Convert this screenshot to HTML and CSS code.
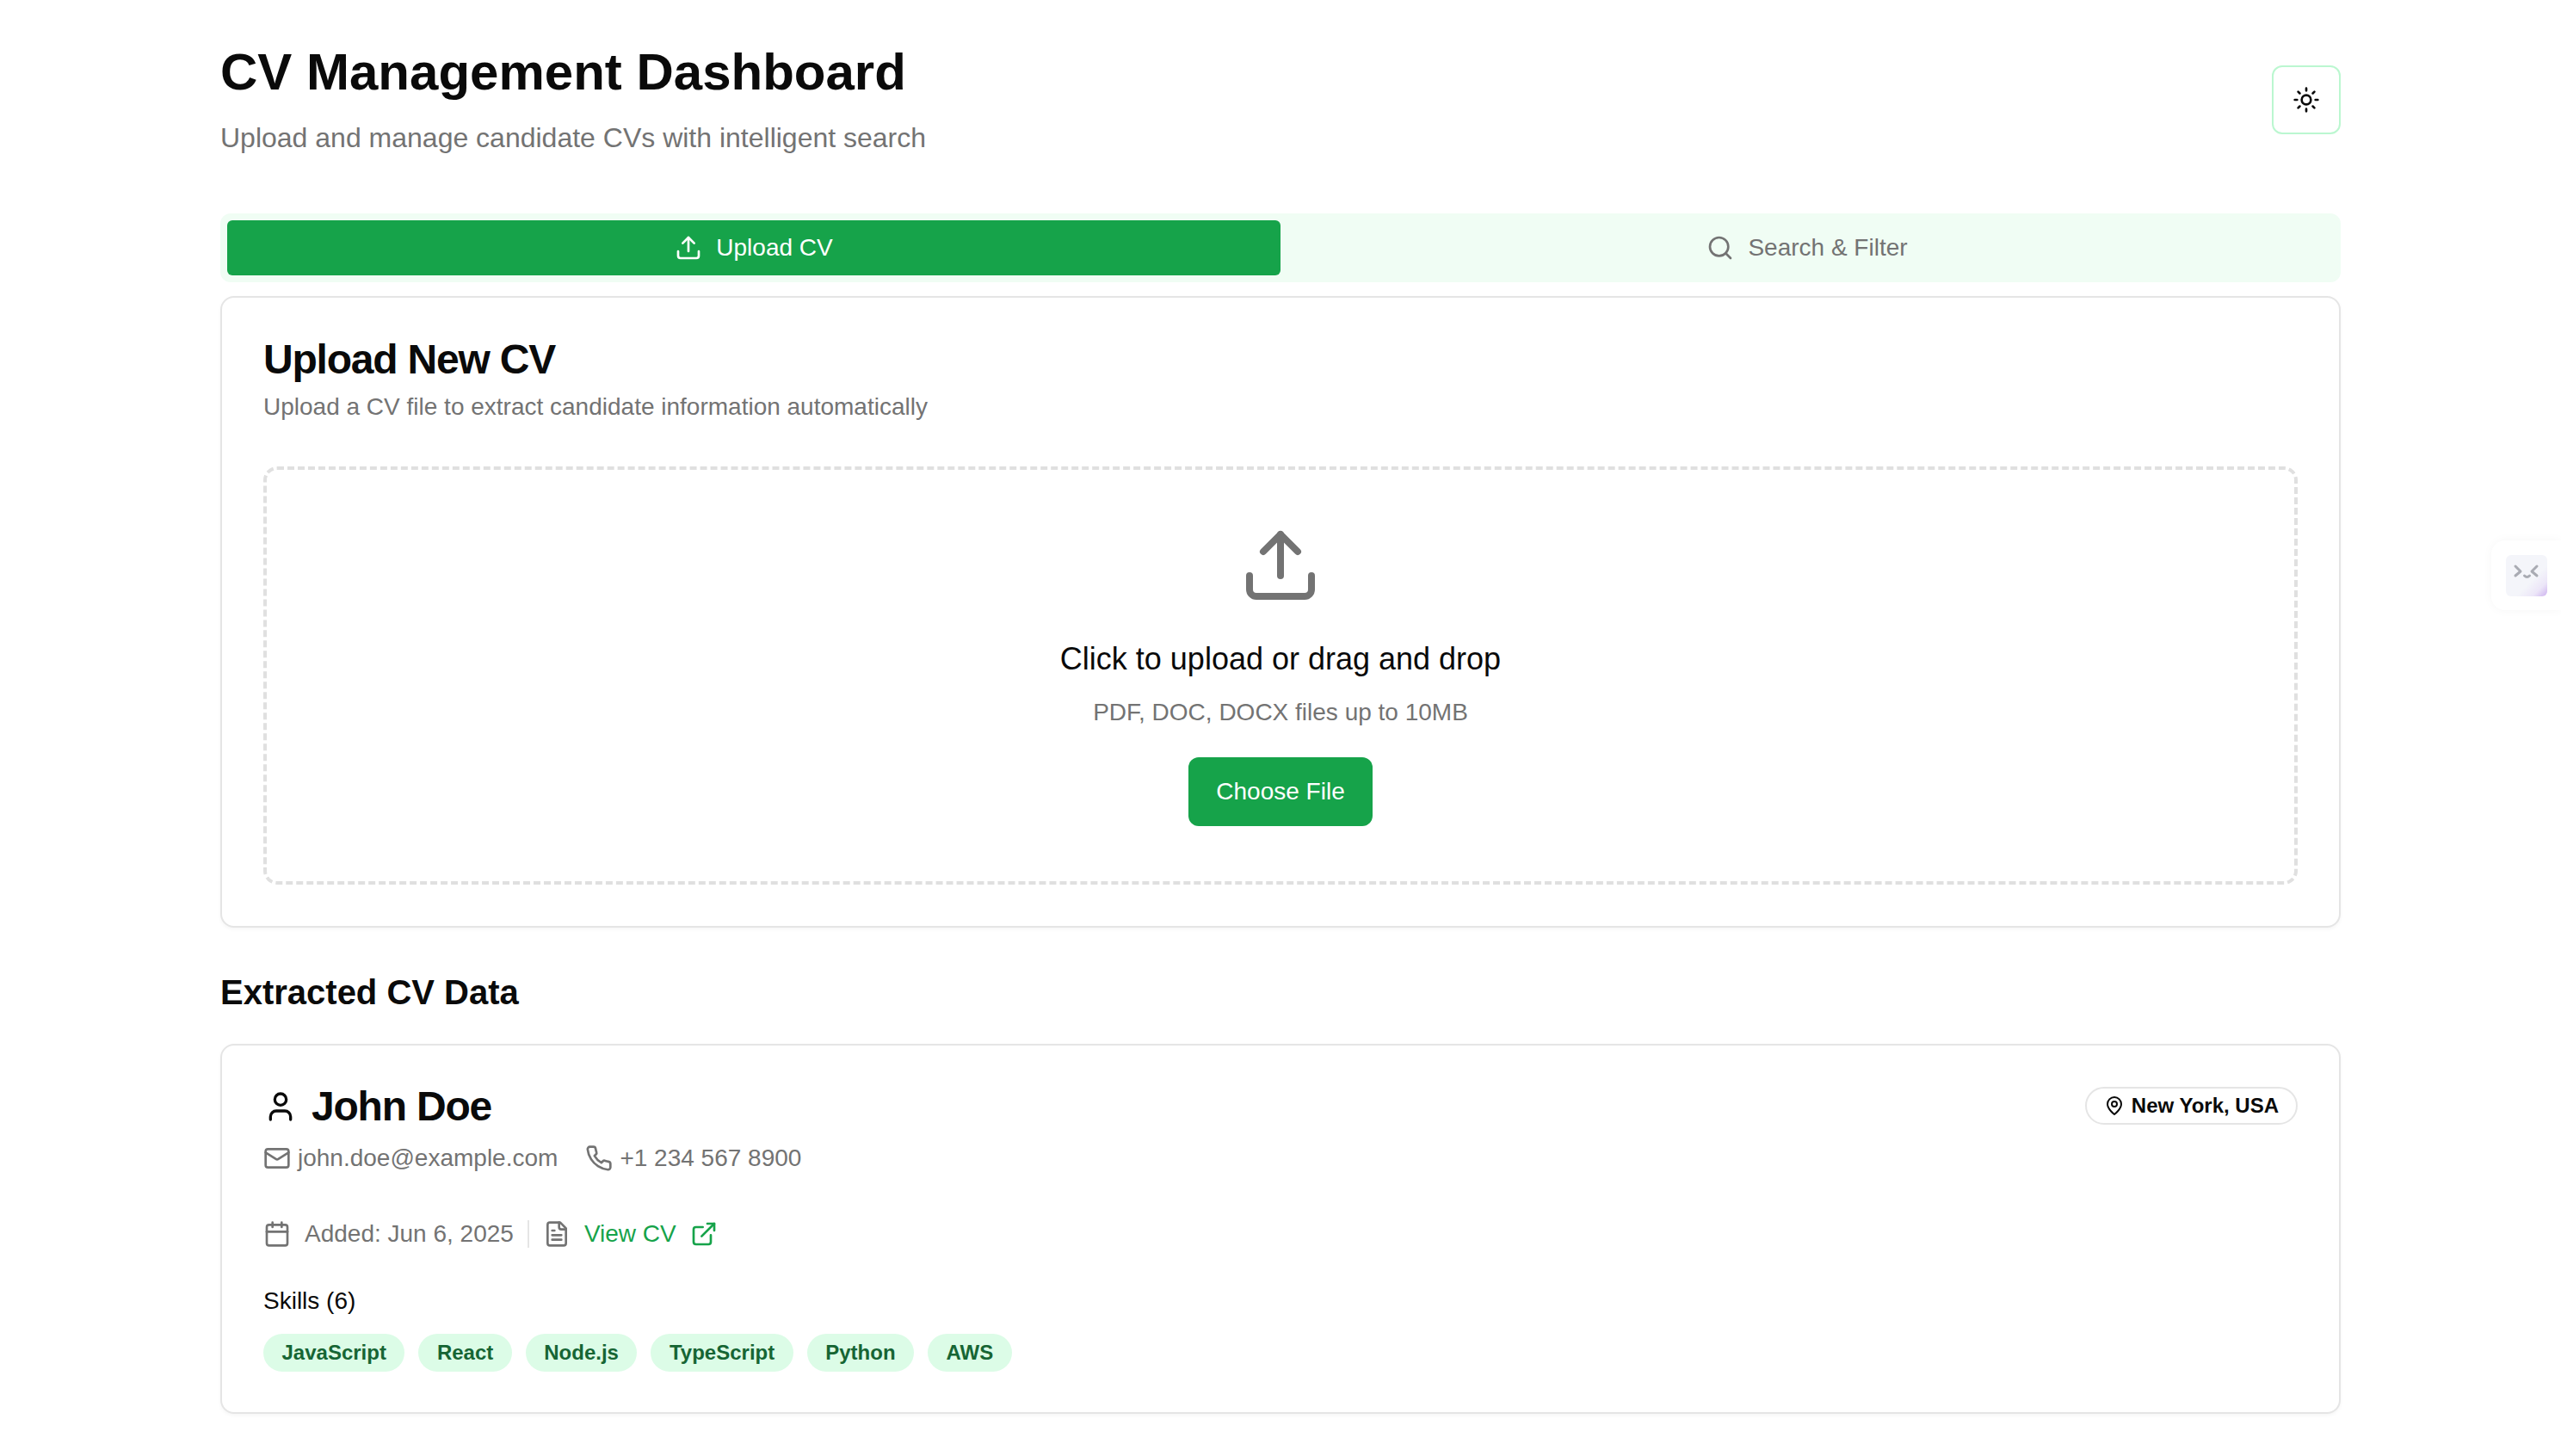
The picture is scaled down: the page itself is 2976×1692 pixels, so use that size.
FILE: index.html
```html
<!DOCTYPE html>
<html lang="en">
<head>
    <meta charset="UTF-8">
    <meta name="viewport" content="width=device-width, initial-scale=1.0">
    <title>CV Management Dashboard</title>
    <link rel="stylesheet" href="styles.css">
</head>
<body>
    <main class="page">
        <header class="top">
            <div>
                <h1>CV Management Dashboard</h1>
                <p class="subtitle">Upload and manage candidate CVs with intelligent search</p>
            </div>
            <button class="theme-btn">
                <svg class="icon" viewBox="0 0 24 24"><circle cx="12" cy="12" r="4"/><path d="M12 2v2M12 20v2M4.93 4.93l1.41 1.41M17.66 17.66l1.41 1.41M2 12h2M20 12h2M6.34 17.66l-1.41 1.41M19.07 4.93l-1.41 1.41"/></svg>
            </button>
        </header>

        <div class="tabs">
            <div class="tab active">
                <svg class="icon" viewBox="0 0 24 24"><path d="M21 15v4a2 2 0 0 1-2 2H5a2 2 0 0 1-2-2v-4"/><path d="M17 8l-5-5-5 5"/><path d="M12 3v12"/></svg>
                Upload CV
            </div>
            <div class="tab">
                <svg class="icon" viewBox="0 0 24 24"><circle cx="11" cy="11" r="8"/><path d="M21 21l-4.3-4.3"/></svg>
                Search &amp; Filter
            </div>
        </div>

        <section class="card">
            <h2>Upload New CV</h2>
            <p class="card-desc">Upload a CV file to extract candidate information automatically</p>
            <div class="dropzone">
                <svg class="drop-icon" viewBox="0 0 24 24"><path d="M21 15v4a2 2 0 0 1-2 2H5a2 2 0 0 1-2-2v-4"/><path d="M17 8l-5-5-5 5"/><path d="M12 3v12"/></svg>
                <h3>Click to upload or drag and drop</h3>
                <p class="drop-hint">PDF, DOC, DOCX files up to 10MB</p>
                <button class="choose-btn">Choose File</button>
            </div>
        </section>

        <h2 class="section-title">Extracted CV Data</h2>

        <section class="card cv-card">
            <div class="cv-head">
                <div>
                    <div class="cv-name">
                        <svg class="icon-name" viewBox="0 0 24 24"><path d="M19 21v-2a4 4 0 0 0-4-4H9a4 4 0 0 0-4 4v2"/><circle cx="12" cy="7" r="4"/></svg>
                        <h2>John Doe</h2>
                    </div>
                    <div class="contact">
                        <span class="contact-item">
                            <svg class="icon" viewBox="0 0 24 24"><rect x="2" y="4" width="20" height="16" rx="2"/><path d="M22 7l-8.97 5.7a1.94 1.94 0 0 1-2.06 0L2 7"/></svg>
                            john.doe@example.com
                        </span>
                        <span class="contact-item">
                            <svg class="icon" viewBox="0 0 24 24"><path d="M22 16.92v3a2 2 0 0 1-2.18 2 19.79 19.79 0 0 1-8.63-3.07 19.5 19.5 0 0 1-6-6 19.79 19.79 0 0 1-3.07-8.67A2 2 0 0 1 4.11 2h3a2 2 0 0 1 2 1.72 12.84 12.84 0 0 0 .7 2.81 2 2 0 0 1-.45 2.11L8.09 9.91a16 16 0 0 0 6 6l1.27-1.27a2 2 0 0 1 2.11-.45 12.84 12.84 0 0 0 2.81.7A2 2 0 0 1 22 16.92z"/></svg>
                            +1 234 567 8900
                        </span>
                    </div>
                </div>
                <span class="location">
                    <svg class="icon-small" viewBox="0 0 24 24"><path d="M20 10c0 6-8 12-8 12s-8-6-8-12a8 8 0 0 1 16 0Z"/><circle cx="12" cy="10" r="3"/></svg>
                    New York, USA
                </span>
            </div>

            <div class="meta">
                <svg class="icon" viewBox="0 0 24 24"><path d="M8 2v4M16 2v4"/><rect x="3" y="4" width="18" height="18" rx="2"/><path d="M3 10h18"/></svg>
                <span>Added: Jun 6, 2025</span>
                <span class="sep"></span>
                <svg class="icon" viewBox="0 0 24 24"><path d="M15 2H6a2 2 0 0 0-2 2v16a2 2 0 0 0 2 2h12a2 2 0 0 0 2-2V7Z"/><path d="M14 2v4a2 2 0 0 0 2 2h4"/><path d="M10 9H8M16 13H8M16 17H8"/></svg>
                <a class="cv-link" href="#">View CV</a>
                <svg class="icon icon-green" viewBox="0 0 24 24"><path d="M15 3h6v6"/><path d="M10 14L21 3"/><path d="M18 13v6a2 2 0 0 1-2 2H5a2 2 0 0 1-2-2V8a2 2 0 0 1 2-2h6"/></svg>
            </div>

            <div class="skills-label">Skills (6)</div>
            <div class="skills">
                <span class="skill">JavaScript</span>
                <span class="skill">React</span>
                <span class="skill">Node.js</span>
                <span class="skill">TypeScript</span>
                <span class="skill">Python</span>
                <span class="skill">AWS</span>
            </div>
        </section>
    </main>

    <div class="side-widget">
        <div class="side-face">
            <svg viewBox="0 0 48 48"><path d="M11 13l6 6-6 5M36 13l-6 6 6 5M21.5 24c2 2 4 2 6 0"/></svg>
        </div>
    </div>
</body>
</html>
```

FILE: styles.css
```css
* {
    box-sizing: border-box;
}

html, body {
    margin: 0;
    background: #fff;
    overflow: hidden;
}

body {
    font-family: "Liberation Sans", Arial, sans-serif;
    color: #0a0a0a;
    height: 1692px;
}

h1, h2, h3, p {
    margin: 0;
}

svg {
    fill: none;
    stroke: currentColor;
    stroke-linecap: round;
    stroke-linejoin: round;
    stroke-width: 2;
    flex-shrink: 0;
}

.icon {
    width: 32px;
    height: 32px;
}

.icon-small {
    width: 24px;
    height: 24px;
}

.icon-green {
    color: #16a34a;
}

.page {
    width: 2560px;
    margin: 0 auto;
    padding: 48px 48px 0;
}

.top {
    display: flex;
    justify-content: space-between;
    align-items: center;
    margin-bottom: 64px;
}

h1 {
    font-size: 60px;
    line-height: 72px;
    font-weight: 700;
}

.subtitle {
    font-size: 32px;
    line-height: 48px;
    color: #737373;
    margin-top: 16px;
}

.theme-btn {
    width: 80px;
    height: 80px;
    display: flex;
    align-items: center;
    justify-content: center;
    background: #fff;
    border: 2px solid #bbf7d0;
    border-radius: 12px;
    color: #0a0a0a;
    padding: 0;
}

.tabs {
    display: grid;
    grid-template-columns: 1fr 1fr;
    height: 80px;
    padding: 8px;
    background: #f0fdf4;
    border-radius: 12px;
}

.tab {
    display: flex;
    align-items: center;
    justify-content: center;
    gap: 16px;
    font-size: 28px;
    color: #737373;
    border-radius: 6px;
}

.tab.active {
    background: #16a34a;
    color: #fff;
}

.card {
    margin-top: 16px;
    padding: 48px;
    background: #fff;
    border: 2px solid #e5e5e5;
    border-radius: 16px;
    box-shadow: 0 2px 4px rgba(0, 0, 0, 0.04);
}

.card h2 {
    font-size: 48px;
    line-height: 48px;
    font-weight: 700;
    letter-spacing: -1.2px;
}

.card-desc {
    margin-top: 11px;
    font-size: 28px;
    line-height: 40px;
    color: #737373;
}

.dropzone {
    margin-top: 49px;
    padding: 63px 64px 64px;
    border: 4px dashed #e0e0e0;
    border-radius: 16px;
    display: flex;
    flex-direction: column;
    align-items: center;
    text-align: center;
}

.drop-icon {
    width: 96px;
    height: 96px;
    color: #737373;
}

.dropzone h3 {
    margin-top: 33px;
    font-size: 36px;
    line-height: 56px;
    font-weight: 400;
}

.drop-hint {
    margin-top: 14px;
    font-size: 28px;
    line-height: 40px;
    color: #737373;
}

.choose-btn {
    margin-top: 32px;
    height: 80px;
    padding: 0 32px;
    font-family: inherit;
    font-size: 28px;
    color: #fff;
    background: #16a34a;
    border: 0;
    border-radius: 12px;
}

.section-title {
    margin-top: 47px;
    font-size: 40px;
    line-height: 56px;
    font-weight: 700;
}

.section-title + .card {
    margin-top: 32px;
}

.cv-card {
    padding-top: 47px;
    padding-bottom: 47px;
}

.cv-head {
    display: flex;
    justify-content: space-between;
    align-items: flex-start;
}

.cv-name {
    display: flex;
    align-items: center;
    gap: 16px;
}

.icon-name {
    width: 40px;
    height: 40px;
}

.contact {
    display: flex;
    gap: 32px;
    margin-top: 16px;
    font-size: 28px;
    line-height: 40px;
    color: #737373;
}

.contact-item {
    display: flex;
    align-items: center;
    gap: 8px;
}

.location {
    display: flex;
    align-items: center;
    gap: 8px;
    height: 44px;
    margin-top: 1px;
    padding: 0 20px;
    border: 2px solid #e5e5e5;
    border-radius: 22px;
    font-size: 24px;
    font-weight: 700;
}

.meta {
    display: flex;
    align-items: center;
    gap: 16px;
    margin-top: 48px;
    font-size: 28px;
    line-height: 40px;
    color: #737373;
}

.sep {
    width: 2px;
    height: 32px;
    background: #e5e5e5;
}

.cv-link {
    color: #16a34a;
    text-decoration: none;
}

.skills-label {
    margin-top: 38px;
    font-size: 28px;
    line-height: 40px;
}

.skills {
    display: flex;
    gap: 16px;
    margin-top: 18px;
}

.skill {
    padding: 4px 19.5px;
    border: 2px solid transparent;
    border-radius: 22px;
    background: #dcfce7;
    color: #166534;
    font-size: 24px;
    line-height: 32px;
    font-weight: 700;
}

.side-widget {
    position: fixed;
    top: 628px;
    right: 0;
    width: 81px;
    height: 81px;
    padding: 17px 0 0 17px;
    background: #fff;
    border-radius: 16px 0 0 16px;
    box-shadow: 0 0 12px rgba(0, 0, 0, 0.04);
}

.side-face {
    width: 48px;
    height: 48px;
    border-radius: 6px;
    background: linear-gradient(135deg, #f4f5fa 62%, #ece6f8 82%, #cdb2ef 100%);
}

.side-face svg {
    display: block;
    width: 48px;
    height: 48px;
    color: #a9abb3;
    stroke-width: 3;
}
```
